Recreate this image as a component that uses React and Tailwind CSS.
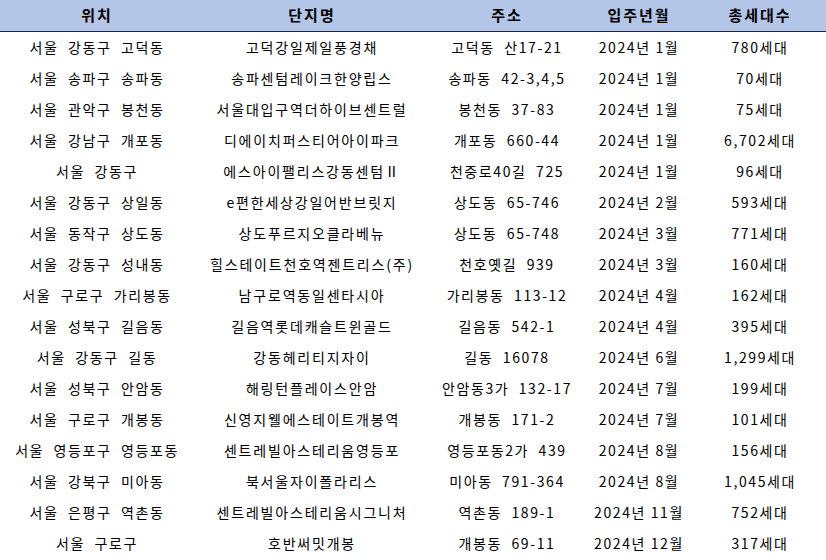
import React from "react";

const rows = [
  ["서울 강동구 고덕동", "고덕강일제일풍경채", "고덕동 산17-21", "2024년 1월", "780세대"],
  ["서울 송파구 송파동", "송파센텀레이크한양립스", "송파동 42-3,4,5", "2024년 1월", "70세대"],
  ["서울 관악구 봉천동", "서울대입구역더하이브센트럴", "봉천동 37-83", "2024년 1월", "75세대"],
  ["서울 강남구 개포동", "디에이치퍼스티어아이파크", "개포동 660-44", "2024년 1월", "6,702세대"],
  ["서울 강동구", "에스아이팰리스강동센텀Ⅱ", "천중로40길 725", "2024년 1월", "96세대"],
  ["서울 강동구 상일동", "e편한세상강일어반브릿지", "상도동 65-746", "2024년 2월", "593세대"],
  ["서울 동작구 상도동", "상도푸르지오클라베뉴", "상도동 65-748", "2024년 3월", "771세대"],
  ["서울 강동구 성내동", "힐스테이트천호역젠트리스(주)", "천호옛길 939", "2024년 3월", "160세대"],
  ["서울 구로구 가리봉동", "남구로역동일센타시아", "가리봉동 113-12", "2024년 4월", "162세대"],
  ["서울 성북구 길음동", "길음역롯데캐슬트윈골드", "길음동 542-1", "2024년 4월", "395세대"],
  ["서울 강동구 길동", "강동헤리티지자이", "길동 16078", "2024년 6월", "1,299세대"],
  ["서울 성북구 안암동", "해링턴플레이스안암", "안암동3가 132-17", "2024년 7월", "199세대"],
  ["서울 구로구 개봉동", "신영지웰에스테이트개봉역", "개봉동 171-2", "2024년 7월", "101세대"],
  ["서울 영등포구 영등포동", "센트레빌아스테리움영등포", "영등포동2가 439", "2024년 8월", "156세대"],
  ["서울 강북구 미아동", "북서울자이폴라리스", "미아동 791-364", "2024년 8월", "1,045세대"],
  ["서울 은평구 역촌동", "센트레빌아스테리움시그니처", "역촌동 189-1", "2024년 11월", "752세대"],
  ["서울 구로구", "호반써밋개봉", "개봉동 69-11", "2024년 12월", "317세대"],
];

const headers = ["위치", "단지명", "주소", "입주년월", "총세대수"];

export default function App() {
  return (
    <div
      className="w-[826px] h-[560px] bg-white text-black overflow-hidden"
      style={{ fontFamily: '"Noto Sans CJK KR", "Noto Sans", sans-serif' }}
    >
      <div className="grid grid-cols-[194px_236px_154px_110px_132px] h-[32px] bg-[#b4c6e7] border-b border-[#222] items-center text-[15px] font-bold tracking-[2px]">
        {headers.map((h) => (
          <div key={h} className="text-center">{h}</div>
        ))}
      </div>
      {rows.map((r, i) => (
        <div
          key={i}
          className="grid grid-cols-[194px_236px_154px_110px_132px] h-[31px] items-center text-[14px] tracking-[1.6px] whitespace-pre"
        >
          <div className="text-center">{r[0].replace(/ /g, "  ")}</div>
          <div className="text-center tracking-[1.8px]">{r[1]}</div>
          <div className="text-center">{r[2].replace(/ /g, "  ")}</div>
          <div className="text-center">{r[3]}</div>
          <div className="text-center">{r[4]}</div>
        </div>
      ))}
    </div>
  );
}
